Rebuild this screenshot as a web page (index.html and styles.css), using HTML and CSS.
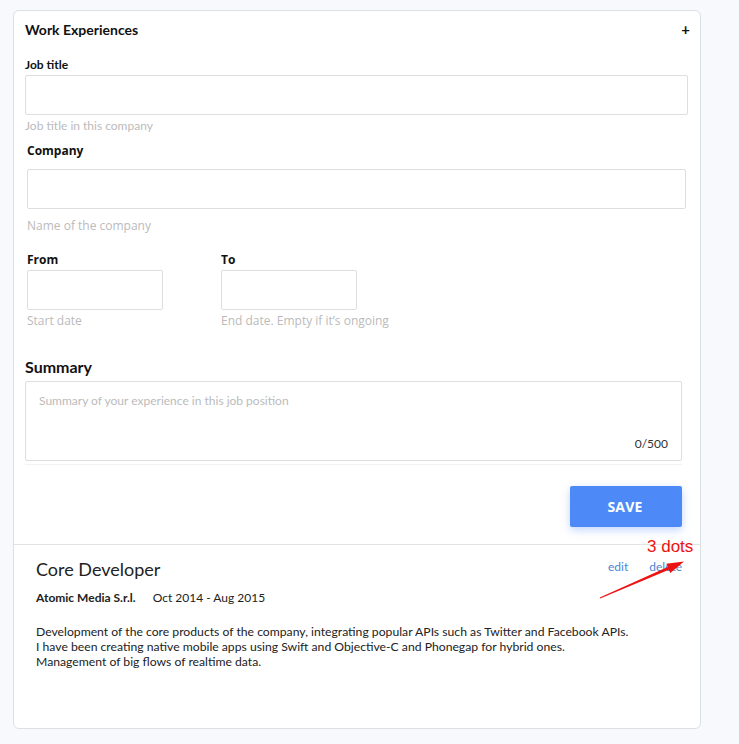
FILE: index.html
```html
<!DOCTYPE html>
<html>
<head>
<meta charset="utf-8">
<link rel="stylesheet" href="styles.css">
</head>
<body>
<div class="card">
  <div class="card-head">
    <span class="title">Work Experiences</span>
    <span class="plus">+</span>
  </div>
  <div class="form">
    <div class="field f-job">
      <label class="lbl lato">Job title</label>
      <div class="input wide1"></div>
      <div class="hint lato">Job title in this company</div>
    </div>
    <div class="field f-company">
      <label class="lbl sans">Company</label>
      <div class="input wide2"></div>
      <div class="hint sans">Name of the company</div>
    </div>
    <div class="dates">
      <div class="field">
        <label class="lbl sans">From</label>
        <div class="input small"></div>
        <div class="hint sans">Start date</div>
      </div>
      <div class="field">
        <label class="lbl sans">To</label>
        <div class="input small"></div>
        <div class="hint sans">End date. Empty if it’s ongoing</div>
      </div>
    </div>
    <div class="summary">
      <div class="sum-title">Summary</div>
      <div class="textarea">
        <div class="placeholder">Summary of your experience in this job position</div>
        <div class="counter">0/500</div>
      </div>
      <div class="underline"></div>
    </div>
    <div class="actions">
      <button class="save">SAVE</button>
    </div>
  </div>
  <div class="entry">
    <div class="entry-head">
      <div class="role">Core Developer</div>
      <div class="links"><a>edit</a><a>delete</a></div>
    </div>
    <div class="meta"><span class="company">Atomic Media S.r.l.</span><span class="period">Oct 2014 - Aug 2015</span></div>
    <div class="desc">Development of the core products of the company, integrating popular APIs such as Twitter and Facebook APIs.<br>I have been creating native mobile apps using Swift and Objective-C and Phonegap for hybrid ones.<br>Management of big flows of realtime data.</div>
  </div>
  <div class="annot">
    <span class="annot-text">3 dots</span>
    <svg class="arrow" width="100" height="50" viewBox="0 0 100 50">
      <path d="M0.8 46.6 L68.7 16.0 L67.3 12.8 L85 10.5 L71.3 22 L69.9 18.8 L1.2 47.4 Z" fill="#ee1111"/>
    </svg>
  </div>
</div>
</body>
</html>
```
FILE: styles.css
```css
* { box-sizing: border-box; }
html, body { margin: 0; padding: 0; }
body {
  background: #f7f9fc;
  font-family: Lato, "Open Sans", sans-serif;
  color: #222;
  width: 739px;
  height: 744px;
  overflow: hidden;
}
.card {
  position: relative;
  margin: 10px 0 0 13px;
  width: 688px;
  height: 719px;
  background: #fff;
  border: 1px solid #dcdfe3;
  border-radius: 6px;
}
.card-head {
  display: flex;
  justify-content: space-between;
  align-items: center;
  padding: 9px 9px 0 11px;
  height: 40px;
}
.title {
  font-weight: 700;
  font-size: 14px;
  line-height: 20px;
  color: #111;
  align-self: flex-start;
}
.plus {
  font-weight: 700;
  font-size: 15px;
  line-height: 20px;
  color: #111;
  align-self: flex-start;
  margin-top: -1px;
  margin-right: 1px;
}
.form { padding: 0 0 0 11px; }
.lato { font-family: Lato, sans-serif; }
.sans { font-family: "Open Sans", sans-serif; }
.lbl {
  display: block;
  font-weight: 700;
  font-size: 12px;
  line-height: 16px;
  color: #111;
}
.input {
  height: 40px;
  border: 1px solid #dedede;
  border-radius: 2px;
  background: #fff;
}
.hint {
  font-size: 12px;
  line-height: 16px;
  color: #bbb;
}
.f-job { padding-top: 6px; }
.f-job .input { margin-top: 2px; width: 663px; }
.f-job .hint { margin-top: 3px; }
.f-company { padding: 9px 0 0 2px; }
.f-company .input { margin-top: 10px; width: 659px; }
.f-company .hint { margin-top: 9px; }
.dates {
  display: flex;
  gap: 58px;
  padding: 18px 0 0 2px;
}
.dates .input { margin-top: 2px; width: 136px; }
.dates .hint { margin-top: 3px; }
.summary { padding-top: 28px; }
.sum-title {
  font-weight: 700;
  font-size: 16px;
  line-height: 20px;
  color: #111;
}
.textarea {
  margin-top: 4px;
  width: 657px;
  height: 80px;
  border: 1px solid #dedede;
  border-radius: 2px;
  position: relative;
  padding: 11px 13px 0;
}
.placeholder {
  font-size: 12px;
  line-height: 16px;
  color: #bbb;
}
.counter {
  position: absolute;
  right: 13px;
  bottom: 8px;
  font-size: 12px;
  line-height: 16px;
  color: #333;
}
.underline {
  margin-top: 3px;
  width: 657px;
  height: 1px;
  background: #f3f3f3;
}
.actions {
  width: 657px;
  display: flex;
  justify-content: flex-end;
  padding-top: 21px;
}
.save {
  width: 112px;
  height: 41px;
  border: none;
  border-radius: 2px;
  background: #4d8af7;
  color: #fff;
  font-family: "Open Sans", sans-serif;
  font-weight: 700;
  font-size: 14px;
  letter-spacing: 0.2px;
  padding: 0 2px 0 0;
  box-shadow: 0 3px 8px rgba(77, 138, 247, 0.35);
}
.entry {
  margin-top: 17px;
  border-top: 1px solid #e2e2e2;
  padding: 13px 18px 0 22px;
}
.entry-head {
  display: flex;
  justify-content: space-between;
  align-items: flex-start;
}
.role {
  font-size: 18px;
  line-height: 22px;
  color: #222;
}
.links {
  display: flex;
  gap: 21px;
  padding-top: 1px;
}
.links a {
  font-size: 12px;
  line-height: 16px;
  color: #4a86d6;
}
.meta {
  margin-top: 10px;
  font-size: 12px;
  line-height: 16px;
  color: #222;
}
.company { font-weight: 700; margin-right: 17px; }
.desc {
  margin-top: 18px;
  font-size: 12.2px;
  line-height: 15px;
  color: #222;
}
.annot {
  position: absolute;
  left: 585px;
  top: 528px;
  width: 110px;
  height: 64px;
}
.annot-text {
  position: absolute;
  left: 48px;
  top: -2px;
  font-family: "Liberation Sans", Arial, sans-serif;
  font-size: 17px;
  line-height: 20px;
  color: #ee1111;
}
.arrow {
  position: absolute;
  left: 0;
  top: 12px;
}
```
